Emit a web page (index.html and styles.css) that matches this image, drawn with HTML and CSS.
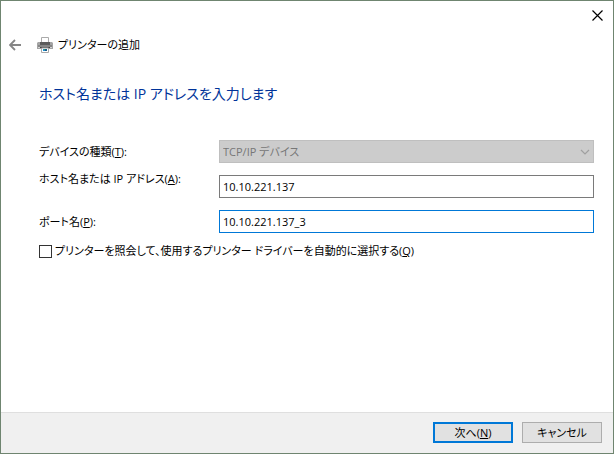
FILE: index.html
```html
<!DOCTYPE html>
<html lang="ja">
<head>
<meta charset="utf-8">
<title>プリンターの追加</title>
<link rel="stylesheet" href="styles.css">
</head>
<body>
<form class="wizard">
  <div class="titlebar">
    <button class="icon-button close" type="button" aria-label="閉じる">
      <svg width="11" height="11" viewBox="0 0 11 11"><path d="M.5 .5l10 10M10.500 .5l-10 10" fill="none" stroke="#000" stroke-width="1.200"/></svg>
    </button>
  </div>
  <header class="header">
    <button class="icon-button" type="button" aria-label="戻る">
      <svg width="12" height="12" viewBox="0 0 12 12"><path d="M6 1L1 6l5 5M1 6h11" fill="none" stroke="#868686" stroke-width="1.800"/></svg>
    </button>
    <svg class="printer" width="16" height="16" viewBox="0 0 16 16">
      <path d="M4.500 5V.5h7V5" fill="#fff" stroke="#aaa"/>
      <path d="M1 5h14l1 1v6H0V6z" fill="#a4a4a4"/>
      <path d="M3 5h10v3H3z" fill="#5c5c5c"/>
      <path d="M1 8h14v2H1z" fill="#858585"/>
      <path d="M1 10h14v1H1z" fill="#d2d2d2"/>
      <path d="M3 10h10v1H3z" fill="#444"/>
      <path d="M4.500 11v4.500h7V11z" fill="#fff" stroke="#a8a8a8"/>
      <path d="M6 12h2v2H6z" fill="#1c8fd0"/>
      <path d="M8 12h2v2H8z" fill="#165a86"/>
      <path d="M7 12h1v1H7z" fill="#35a060"/>
    </svg>
    <span class="title">プリンターの追加</span>
  </header>
  <main class="content">
    <h1 class="heading">ホスト名または IP アドレスを入力します</h1>
    <div class="fields">
      <label class="label" for="device">デバイスの種類(<u>T</u>):</label>
      <div class="select-wrap">
        <select class="field" id="device" disabled><option>TCP/IP デバイス</option></select>
        <svg class="chevron" width="10" height="6" viewBox="0 0 10 6"><path d="M1 1l4 4 4-4" fill="none" stroke="#a0a0a0" stroke-width="1.200"/></svg>
      </div>
      <label class="label host-label" for="host">ホスト名または IP アドレス(<u>A</u>):</label>
      <input class="field" id="host" type="text" value="10.10.221.137">
      <label class="label" for="port">ポート名(<u>P</u>):</label>
      <input class="field active" id="port" type="text" value="10.10.221.137_3">
    </div>
    <div class="query">
      <input class="checkbox" id="query" type="checkbox">
      <label for="query">プリンターを照会して、使用するプリンター ドライバーを自動的に選択する(<u>Q</u>)</label>
    </div>
  </main>
  <footer class="footer">
    <button class="button primary" type="submit">次へ(<u>N</u>)</button>
    <button class="button" type="button">キャンセル</button>
  </footer>
</form>
</body>
</html>
```
FILE: styles.css
```css
* {
  box-sizing: border-box;
}

body {
  margin: 0;
  font-family: "Open Sans", "Noto Sans CJK JP", sans-serif;
  font-size: 11px;
  line-height: 20px;
  font-feature-settings: "palt";
  color: #000;
}

input,
select,
button {
  font: inherit;
  font-feature-settings: inherit;
  color: inherit;
}

u {
  text-underline-offset: 1px;
}

.wizard {
  display: flex;
  flex-direction: column;
  min-height: 100vh;
  border: 1px solid #6f8570;
  background: #fff;
}

.titlebar {
  display: flex;
  justify-content: flex-end;
  padding: 8px 9px 0 0;
}

.icon-button {
  display: flex;
  padding: 0;
  border: 0;
  background: none;
}

.close {
  padding: 1px;
}

.header {
  display: flex;
  align-items: center;
  padding: 13px 8px 0;
}

.printer {
  margin: 0 5px 0 16px;
}

.content {
  flex: 1;
  padding: 28px 19px 0 38px;
}

.heading {
  margin: 0;
  font-size: 14px;
  font-weight: 400;
  line-height: 22px;
  color: #003399;
}

.fields {
  display: grid;
  grid-template-columns: 180px 1fr;
  row-gap: 12px;
  padding-top: 35px;
}

.label {
  line-height: 23px;
}

.host-label {
  line-height: 8px;
}

.field {
  display: block;
  width: 100%;
  height: 23px;
  padding: 0 3px;
  border: 1px solid #7a7a7a;
  border-radius: 0;
  background: #fff;
  line-height: 20px;
  outline: none;
}

.field.active {
  border-color: #0078d7;
}

.select-wrap {
  position: relative;
}

select.field {
  appearance: none;
  border-color: #bfbfbf;
  background: #ccc;
  color: #777;
  opacity: 1;
}

.chevron {
  position: absolute;
  top: 9px;
  right: 4px;
}

.query {
  display: flex;
  align-items: center;
  gap: 3px;
  padding-top: 8px;
}

.checkbox {
  appearance: none;
  width: 13px;
  height: 13px;
  margin: 0;
  border: 1px solid #333;
  background: #fff;
}

.footer {
  display: flex;
  justify-content: flex-end;
  gap: 9px;
  padding: 9px 11px 10px;
  border-top: 1px solid #dfdfdf;
  background: #f0f0f0;
}

.button {
  width: 80px;
  height: 21px;
  padding: 0;
  border: 1px solid #adadad;
  background: #e1e1e1;
  line-height: 17px;
}

.primary {
  border: 2px solid #0078d7;
}
```
